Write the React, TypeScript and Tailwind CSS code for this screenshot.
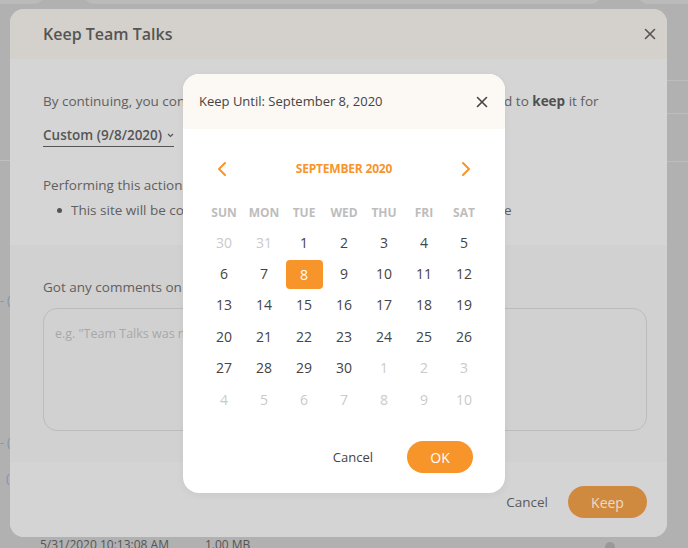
import React from 'react';

const weekdays = ['SUN', 'MON', 'TUE', 'WED', 'THU', 'FRI', 'SAT'];

// 6 weeks shown, with days from the months around it greyed out
const weeks = [
  [[30, false], [31, false], [1, true], [2, true], [3, true], [4, true], [5, true]],
  [[6, true], [7, true], [8, true], [9, true], [10, true], [11, true], [12, true]],
  [[13, true], [14, true], [15, true], [16, true], [17, true], [18, true], [19, true]],
  [[20, true], [21, true], [22, true], [23, true], [24, true], [25, true], [26, true]],
  [[27, true], [28, true], [29, true], [30, true], [1, false], [2, false], [3, false]],
  [[4, false], [5, false], [6, false], [7, false], [8, false], [9, false], [10, false]],
] as [number, boolean][][];

const Close = ({ className }: { className?: string }) => (
  <svg width="12" height="12" viewBox="0 0 12 12" className={className}>
    <path d="M1.5 1.5l9 9M10.5 1.5l-9 9" stroke="currentColor" strokeWidth="1.6" strokeLinecap="round" />
  </svg>
);

const Chevron = ({ dir }: { dir: 'left' | 'right' }) => (
  <svg width="10" height="16" viewBox="0 0 10 16">
    <path
      d={dir === 'left' ? 'M8 2L2 8l6 6' : 'M2 2l6 6-6 6'}
      fill="none"
      stroke="#f7952b"
      strokeWidth="2"
      strokeLinecap="round"
      strokeLinejoin="round"
    />
  </svg>
);

const DatePicker = () => (
  <div className="absolute left-[183px] top-[74px] w-[322px] h-[419px] rounded-[16px] bg-white overflow-hidden flex flex-col shadow-[0_2px_8px_rgba(0,0,0,0.05)]">
    <div className="h-[55px] bg-[#fcf8f3] flex items-center justify-between pl-[16px] pr-[17px]">
      <span className="text-[13px] text-[#444]">Keep Until: September 8, 2020</span>
      <Close className="text-[#444]" />
    </div>

    <div className="flex items-center justify-between px-[34px] mt-[29px] h-[22px]">
      <Chevron dir="left" />
      <span className="text-[12px] font-bold text-[#f7952b] tracking-[-0.2px]">SEPTEMBER 2020</span>
      <Chevron dir="right" />
    </div>

    <div className="mx-auto w-[280px] mt-[23px]">
      <div className="grid grid-cols-7 h-[20px] items-center">
        {weekdays.map(d => (
          <span key={d} className="text-center text-[12px] leading-[16px] font-bold text-[#bdbdbd]">{d}</span>
        ))}
      </div>
      <div className="mt-[4px]">
        {weeks.map((week, i) => (
          <div key={i} className="grid grid-cols-7 h-[31.4px] items-center">
            {week.map(([n, inMonth], j) => {
              const selected = inMonth && n === 8;
              return (
                <div key={j} className="flex justify-center">
                  <span
                    className={
                      selected
                        ? 'w-[37px] h-[29px] rounded-[4px] bg-[#f7952b] text-white flex items-center justify-center text-[14px]'
                        : inMonth
                        ? 'text-[14px] leading-[20px] text-[#444]'
                        : 'text-[14px] leading-[20px] text-[#cacaca]'
                    }
                  >
                    {n}
                  </span>
                </div>
              );
            })}
          </div>
        ))}
      </div>
    </div>

    <div className="flex items-center justify-end gap-[34px] pr-[32px] mt-[26px]">
      <span className="text-[13px] text-[#444]">Cancel</span>
      <span className="w-[66px] h-[32px] rounded-full bg-[#f7952b] text-white text-[14px] flex items-center justify-center">OK</span>
    </div>
  </div>
);

export default function App() {
  return (
    <div
      className="relative w-[688px] h-[548px] overflow-hidden bg-[#b1b1b1]"
      style={{ fontFamily: '"Open Sans", "Noto Sans", sans-serif' }}
    >
      {/* page behind the overlay */}
      <div className="absolute left-[-40px] top-[-20px] w-[85px] h-[24px] rounded-[12px] bg-[#bbbbbb]" />
      <div className="absolute left-[83px] top-[-20px] w-[519px] h-[24px] rounded-[12px] bg-[#bbbbbb]" />
      <div className="absolute left-[637px] top-[-20px] w-[90px] h-[24px] rounded-[12px] bg-[#bbbbbb]" />
      <div className="absolute left-0 top-[160px] w-[10px] h-px bg-[#c0c0c0]" />
      <div className="absolute right-0 top-[80px] w-[21px] h-px bg-[#bdbdbd]" />
      <div className="absolute right-0 top-[113px] w-[21px] h-px bg-[#bdbdbd]" />
      <div className="absolute right-0 top-[161px] w-[21px] h-px bg-[#bdbdbd]" />
      <div className="absolute left-0 top-[292px] text-[12px] text-[#7c95b0]">- (</div>
      <div className="absolute left-0 top-[434px] text-[12px] text-[#7c95b0]">- (</div>
      <div className="absolute left-[6px] top-[470px] text-[12px] text-[#7c95b0]">(</div>
      <div className="absolute left-[40px] top-[536px] flex gap-[36px] text-[12px] text-[#555]">
        <span>5/31/2020 10:13:08 AM</span>
        <span>1.00 MB</span>
      </div>
      <div className="absolute left-[605px] top-[542px] w-[10px] h-[10px] rounded-full bg-[#999]" />

      {/* dialog */}
      <div className="absolute left-[10px] top-[9px] w-[657px] h-[528px] rounded-[14px] overflow-hidden flex flex-col bg-[#d4d4d4]">
        <div className="h-[50px] shrink-0 bg-[#d4d1cc] flex items-center justify-between pl-[33px] pr-[11px]">
          <span className="text-[16px] font-semibold text-[#555]">Keep Team Talks</span>
          <Close className="text-[#555]" />
        </div>

        <div className="h-[186px] shrink-0 bg-[#d5d5d5] pl-[33px] pr-[20px] pt-[32px] text-[13.5px] text-[#606060]">
          <p className="leading-[20px] whitespace-nowrap">
            By continuing, you confirm that this site is still being used and you do need to <b className="font-bold text-[#505050]">keep</b> it for
          </p>
          <div className="mt-[15px] flex">
            <span className="flex items-center gap-[5px] border-b border-[#555] pb-[2px] text-[#555] font-semibold leading-[18px]">
              Custom (9/8/2020)
              <svg width="7" height="5" viewBox="0 0 7 5">
                <path d="M1 1l2.5 2.5L6 1" fill="none" stroke="#555" strokeWidth="1.2" />
              </svg>
            </span>
          </div>
          <p className="mt-[28px] leading-[20px]">Performing this actions will make sure that:</p>
          <ul className="mt-[5px] pl-[14px] leading-[20px]">
            <li className="flex items-center gap-[9px] whitespace-nowrap">
              <span className="w-[5px] h-[5px] rounded-full bg-[#555]" />
              This site will be considered as active and kept for the selected timeline
            </li>
          </ul>
        </div>

        <div className="h-[217px] shrink-0 bg-[#d1d1d1] pl-[33px] pr-[20px] pt-[32px] text-[13.5px] text-[#606060]">
          <p className="leading-[20px]">Got any comments on why this Team should be kept?</p>
          <div className="mt-[11px] h-[123px] rounded-[14px] border border-[#bcbcbc] px-[11px] pt-[16px] text-[12.5px] text-[#a8a8a8]">
            e.g. "Team Talks was moved to a new workspace"
          </div>
        </div>

        <div className="flex-1 bg-[#d4d4d4] flex items-center justify-end gap-[20px] pr-[20px] pt-[5px]">
          <span className="text-[13.5px] text-[#5a5a5a]">Cancel</span>
          <span className="w-[79px] h-[32px] rounded-full bg-[#d08a3f] text-[#ecdcc9] text-[14px] flex items-center justify-center">Keep</span>
        </div>
      </div>

      <DatePicker />
    </div>
  );
}
